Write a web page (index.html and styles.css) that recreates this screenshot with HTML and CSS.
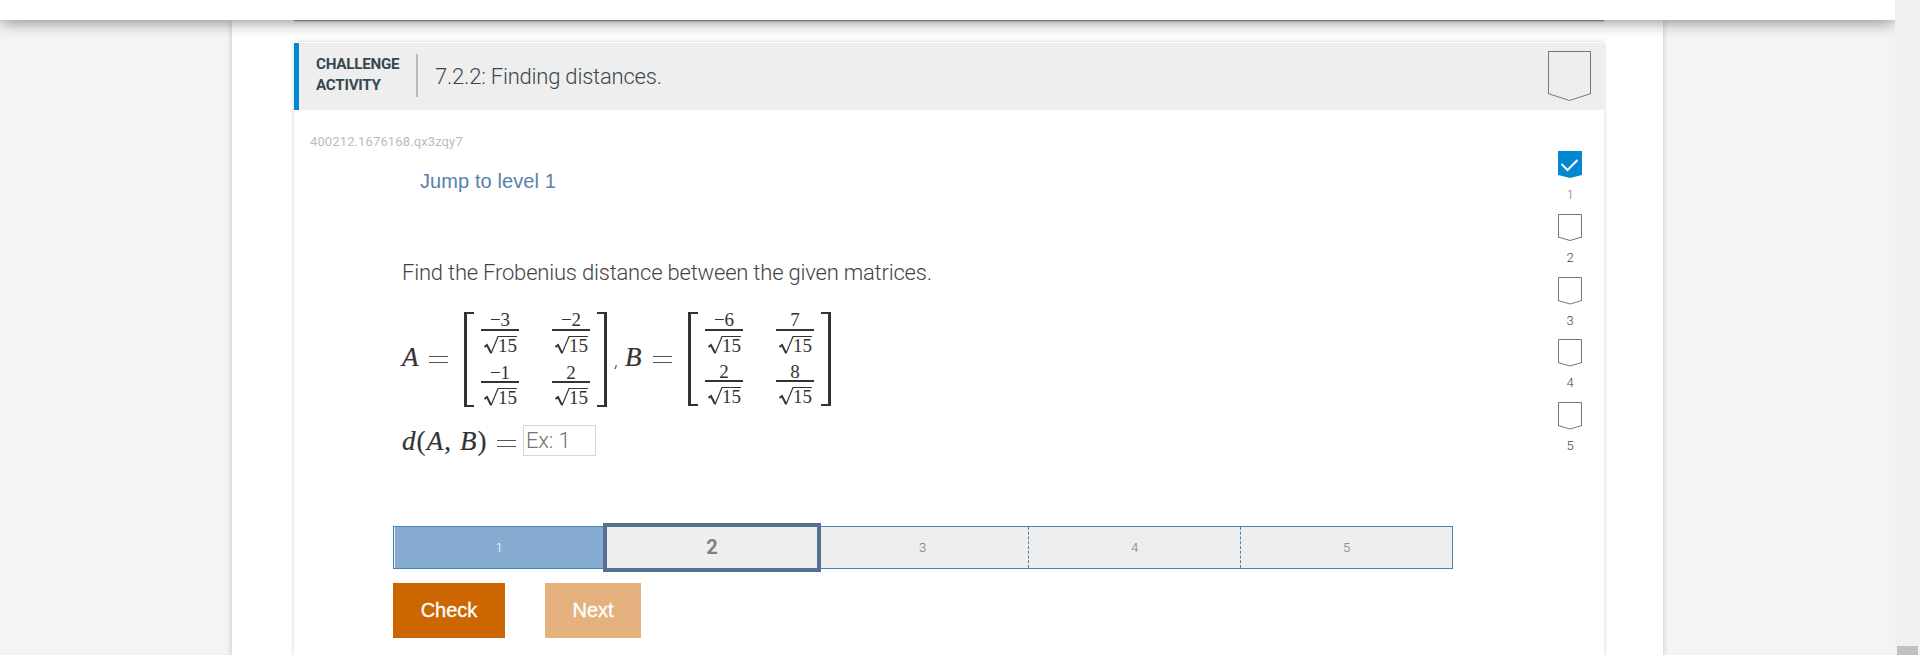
FILE: index.html
```
<!DOCTYPE html>
<html lang="en">
<head>
  <meta charset="utf-8">
  <title>7.2.2: Finding distances</title>
  <link rel="stylesheet" href="styles.css">
</head>
<body>
  <div class="window">
    <div class="page">
      <header class="topbar"></header>
      <main class="section">
        <div class="previous-card"></div>
        <div class="card">
          <div class="card-header">
            <div class="activity-type">CHALLENGE<br>ACTIVITY</div>
            <h1 class="title">7.2.2: Finding distances.</h1>
            <svg class="badge-large" width="46" height="52" viewBox="0 0 46 52"><path d="M1.5 44V1.5H43.5V44M1 43.5L22.5 50.5L44 43.5"/></svg>
          </div>

          <div class="card-body">
            <div class="activity">
              <div class="activity-id">400212.1676168.qx3zqy7</div>
              <a class="jump">Jump to level 1</a>
              <p class="question">Find the Frobenius distance between the given matrices.</p>

              <div class="matrices">
                <span class="var">A</span><span class="eq"></span>
                <div class="matrix matrix-a">
                  <div class="frac"><span class="num">−3</span><span class="den"><svg class="root" width="35" height="20" viewBox="0 0 35 20"><path class="tick" d="M1.5 12L4 10L8 18"/><path d="M8 18.5L15 1.5H34"/></svg><span>15</span></span></div>
                  <div class="frac"><span class="num">−2</span><span class="den"><svg class="root" width="35" height="20" viewBox="0 0 35 20"><path class="tick" d="M1.5 12L4 10L8 18"/><path d="M8 18.5L15 1.5H34"/></svg><span>15</span></span></div>
                  <div class="frac"><span class="num">−1</span><span class="den"><svg class="root" width="35" height="20" viewBox="0 0 35 20"><path class="tick" d="M1.5 12L4 10L8 18"/><path d="M8 18.5L15 1.5H34"/></svg><span>15</span></span></div>
                  <div class="frac"><span class="num">2</span><span class="den"><svg class="root" width="35" height="20" viewBox="0 0 35 20"><path class="tick" d="M1.5 12L4 10L8 18"/><path d="M8 18.5L15 1.5H34"/></svg><span>15</span></span></div>
                </div>
                <span class="comma">,</span>
                <span class="var">B</span><span class="eq"></span>
                <div class="matrix matrix-b">
                  <div class="frac"><span class="num">−6</span><span class="den"><svg class="root" width="35" height="20" viewBox="0 0 35 20"><path class="tick" d="M1.5 12L4 10L8 18"/><path d="M8 18.5L15 1.5H34"/></svg><span>15</span></span></div>
                  <div class="frac"><span class="num">7</span><span class="den"><svg class="root" width="35" height="20" viewBox="0 0 35 20"><path class="tick" d="M1.5 12L4 10L8 18"/><path d="M8 18.5L15 1.5H34"/></svg><span>15</span></span></div>
                  <div class="frac"><span class="num">2</span><span class="den"><svg class="root" width="35" height="20" viewBox="0 0 35 20"><path class="tick" d="M1.5 12L4 10L8 18"/><path d="M8 18.5L15 1.5H34"/></svg><span>15</span></span></div>
                  <div class="frac"><span class="num">8</span><span class="den"><svg class="root" width="35" height="20" viewBox="0 0 35 20"><path class="tick" d="M1.5 12L4 10L8 18"/><path d="M8 18.5L15 1.5H34"/></svg><span>15</span></span></div>
                </div>
              </div>

              <div class="answer">
                <span class="distance"><i>d</i>(<i>A</i>, <i>B</i>)</span><span class="eq"></span>
                <input class="answer-input" type="text" placeholder="Ex: 1">
              </div>

              <div class="levels">
                <div class="level done">1</div>
                <div class="level current">2</div>
                <div class="level">3</div>
                <div class="level">4</div>
                <div class="level">5</div>
              </div>

              <div class="buttons">
                <button class="check">Check</button>
                <button class="next">Next</button>
              </div>
            </div>

            <div class="progress">
              <div class="step first"><svg width="24" height="28" viewBox="0 0 24 28"><path class="filled" d="M0 0H24V24L12 27L0 24Z"/><path class="tickmark" d="M3.5 13L9.5 19L19.5 9"/></svg><span>1</span></div>
              <div class="step"><svg width="24" height="28" viewBox="0 0 24 28"><path d="M.5 23.5V.5H23.5V23.5M0 23L12 26.5L24 23"/></svg><span>2</span></div>
              <div class="step"><svg width="24" height="28" viewBox="0 0 24 28"><path d="M.5 24V.5H23.5V24M0 23.5L12 27L24 23.5"/></svg><span>3</span></div>
              <div class="step"><svg width="24" height="28" viewBox="0 0 24 28"><path d="M.5 24V.5H23.5V24M0 23.5L12 27L24 23.5"/></svg><span>4</span></div>
              <div class="step"><svg width="24" height="28" viewBox="0 0 24 28"><path d="M.5 24V.5H23.5V24M0 23.5L12 27L24 23.5"/></svg><span>5</span></div>
            </div>
          </div>
        </div>
      </main>
    </div>
    <div class="scrollbar"><div class="thumb"></div></div>
  </div>
</body>
</html>
```
FILE: styles.css
```
* {
  box-sizing: border-box;
}

body {
  margin: 0;
  height: 655px;
  overflow: hidden;
  font-family: Roboto, sans-serif;
  font-weight: 300;
  color: #37474f;
}

.window {
  display: flex;
  height: 655px;
}

.page {
  display: flex;
  flex-direction: column;
  width: 1895px;
  background-color: #f4f4f4;
  overflow: hidden;
}

.topbar {
  flex: none;
  height: 20px;
  background-color: #fff;
  box-shadow: 0 2px 16px rgba(0, 0, 0, 0.45);
  z-index: 1;
}

.section {
  flex: 1;
  width: 1431px;
  margin-left: 232px;
  padding: 0 59px 0 62px;
  background-color: #fff;
  box-shadow: 0 0 6px rgba(0, 0, 0, 0.2);
}

.previous-card {
  height: 1px;
  background-color: #999;
  box-shadow: 0 0 3px rgba(0, 0, 0, 0.5);
}

.card {
  width: 1310px;
  height: 640px;
  margin-top: 21px;
  padding-top: 1px;
  background-color: #fff;
  box-shadow: 0 0 4px rgba(0, 0, 0, 0.2);
}

.card-header {
  display: flex;
  align-items: center;
  height: 67px;
  padding: 0 11px 2px 17px;
  border-left: 5px solid #0288d1;
  background-color: #eee;
}

.activity-type {
  width: 102px;
  height: 43px;
  border-right: 2px solid #bbb;
  font-size: 15.2px;
  font-weight: 700;
  line-height: 21px;
  letter-spacing: -0.25px;
}

.title {
  flex: 1;
  margin: 2px 0 0 17px;
  font-size: 22px;
  font-weight: 300;
  letter-spacing: -0.2px;
}

svg {
  display: block;
  fill: none;
  stroke: #777;
}

.card-body {
  display: flex;
  justify-content: space-between;
}

.activity {
  width: 1160px;
  padding: 24px 0 0 17px;
}

.activity-id {
  height: 16px;
  margin-left: -1px;
  font-size: 13px;
  line-height: 16px;
  font-weight: 400;
  letter-spacing: 0.12px;
  color: #bbb;
}

.jump {
  display: block;
  margin: 19px 0 0 109px;
  font-family: "Liberation Sans", Arial, sans-serif;
  font-size: 20px;
  line-height: 24px;
  font-weight: 400;
  letter-spacing: 0.1px;
  color: #5780ad;
}

.question {
  margin: 65px 0 0 91px;
  font-size: 22px;
  line-height: 30px;
  letter-spacing: -0.2px;
  color: #444;
}

.matrices,
.answer {
  display: flex;
  margin-left: 91px;
  font-family: "Liberation Serif", serif;
  font-weight: 400;
  color: #333;
}

.matrices {
  height: 95px;
  margin-top: 24px;
}

.var {
  width: 20px;
  margin-top: 29px;
  font-size: 27px;
  line-height: 32px;
  font-style: italic;
  -webkit-text-stroke: 0.2px #333;
}

.eq {
  width: 19px;
  height: 7px;
  margin: 44px 0 0 7px;
  border: solid #555;
  border-width: 1px 0;
}

.matrix {
  display: grid;
  flex: none;
  grid-template-columns: 38px 38px;
  grid-template-rows: 53px 42px;
  column-gap: 33px;
  width: 143px;
  height: 95px;
  padding-left: 17px;
  /* the two brackets */
  background:
    linear-gradient(#333, #333) left / 3px 100%,
    linear-gradient(#333, #333) left top / 10px 2px,
    linear-gradient(#333, #333) left bottom / 10px 2px,
    linear-gradient(#333, #333) right / 3px 100%,
    linear-gradient(#333, #333) right top / 10px 2px,
    linear-gradient(#333, #333) right bottom / 10px 2px;
  background-repeat: no-repeat;
}

.matrix-a {
  margin-left: 16px;
}

.matrix-b {
  grid-template-rows: 52px 42px;
  height: 94px;
  margin-left: 16px;
}

.frac {
  display: flex;
  flex-direction: column;
  font-size: 19px;
  text-align: center;
}

.num {
  height: 19px;
  line-height: 15px;
  border-bottom: 2px solid #333;
}

.den {
  position: relative;
  height: 24px;
  padding: 4px 2px 0 0;
  line-height: 21px;
  text-align: right;
}

.root {
  position: absolute;
  left: 2px;
  top: 4px;
  stroke: #333;
  stroke-width: 1.2;
}

.tick {
  stroke-width: 2;
}

.comma {
  width: 18px;
  padding: 38px 0 0 8px;
  font-family: Roboto, sans-serif;
  font-size: 18px;
  line-height: 22px;
  font-style: italic;
  font-weight: 300;
}

.comma ~ .eq {
  margin-left: 8px;
}

.answer {
  margin-top: 18px;
}

.distance {
  width: 88px;
  font-size: 27px;
  line-height: 32px;
  letter-spacing: 1.1px;
  white-space: nowrap;
  -webkit-text-stroke: 0.2px #333;
}

.answer .eq {
  margin-top: 15px;
}

.answer-input {
  width: 73px;
  height: 31px;
  margin-left: 7px;
  padding: 0 2px;
  border: 1px solid #cfd8dc;
  font-family: Roboto, sans-serif;
  font-size: 22px;
  font-weight: 300;
  letter-spacing: -0.2px;
}

.answer-input::placeholder {
  color: #757575;
}

.levels {
  display: flex;
  width: 1060px;
  height: 43px;
  margin: 69px 0 0 82px;
  padding-left: 1px;
  border: 1px solid #4682b4;
  background-color: #eee;
}

.level {
  flex: 1;
  border-right: 1px dashed #4682b4;
  font-size: 13px;
  line-height: 42px;
  text-align: center;
  font-weight: 300;
  color: #777;
}

.level:last-child {
  border-right: none;
}

.level.done {
  flex: none;
  width: 212px;
  padding-right: 4px;
  border-right: none;
  background-color: #87acd2;
  color: #fff;
}

.level.current {
  flex: none;
  width: 218px;
  height: 49px;
  margin: -4px -4px 0;
  border: 4px solid #586f94;
  background-color: #eee;
  font-size: 20px;
  line-height: 41px;
  font-weight: 700;
  color: #808080;
  z-index: 1;
}

.buttons {
  display: flex;
  gap: 40px;
  margin: 14px 0 0 82px;
}

button {
  height: 55px;
  padding: 0;
  border: none;
  font-family: "Liberation Sans", Arial, sans-serif;
  font-size: 20px;
  color: #fff;
  -webkit-text-stroke: 0.3px #fff;
}

.check {
  width: 112px;
  background-color: #c60;
}

.next {
  width: 96px;
  background-color: #e5b17f;
}

.progress {
  width: 24px;
  margin: 41px 22px 0 0;
}

.step {
  height: 62.8px;
  font-size: 13px;
  line-height: 16px;
  text-align: center;
}

.step span {
  display: block;
  margin-top: 8px;
}

.first span {
  color: #78858c;
}

.filled {
  fill: #0288d1;
  stroke: none;
}

.tickmark {
  stroke: #fff;
  stroke-width: 2;
}

.scrollbar {
  display: flex;
  align-items: flex-end;
  justify-content: center;
  width: 25px;
  background-color: #f0f0f0;
}

.thumb {
  width: 21px;
  height: 9px;
  background-color: #c1c1c1;
}
```
